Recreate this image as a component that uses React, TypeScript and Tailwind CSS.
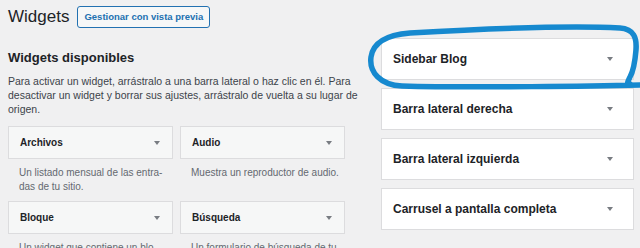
import React from "react";

const Arrow = () => (
  <svg width="6" height="4" viewBox="0 0 6 4" className="shrink-0">
    <polygon points="0,0 6,0 3,4" fill="#787c82" />
  </svg>
);

type W = { title: string; lines: string[] };

const widgets: W[] = [
  { title: "Archivos", lines: ["Un listado mensual de las entra-", "das de tu sitio."] },
  { title: "Audio", lines: ["Muestra un reproductor de audio."] },
  { title: "Bloque", lines: ["Un widget que contiene un blo-", "que."] },
  { title: "Búsqueda", lines: ["Un formulario de búsqueda de tu", "sitio."] },
];

const sidebars = [
  "Sidebar Blog",
  "Barra lateral derecha",
  "Barra lateral izquierda",
  "Carrusel a pantalla completa",
];

export default function App() {
  return (
    <div
      className="relative w-[640px] h-[248px] overflow-hidden bg-[#f0f0f1] text-[#1d2327]"
      style={{ fontFamily: '"Liberation Sans", Arial, sans-serif' }}
    >
      <div className="mt-[6px] h-[22px] pl-[8px] flex items-center gap-[8px]">
        <h1 className="text-[17px] leading-[22px] font-normal">Widgets</h1>
        <button className="h-[22px] px-[6px] rounded-[3px] border border-[#2271b1] bg-[#f6f7f7] text-[#2271b1] text-[9.5px] font-semibold leading-[20px]">
          Gestionar con vista previa
        </button>
      </div>

      <div className="mt-[10px] flex pl-[8px] gap-[36px]">
        <div className="w-[337px] pt-[12px]">
          <h2 className="text-[13px] leading-[16px] font-semibold">Widgets disponibles</h2>
          <p className="mt-[8px] text-[10.5px] leading-[14px] text-[#3c434a] whitespace-nowrap">
            Para activar un widget, arrástralo a una barra lateral o haz clic en él. Para
            <br />
            desactivar un widget y borrar sus ajustes, arrástralo de vuelta a su lugar de
            <br />
            origen.
          </p>
          <div className="mt-[10px] grid grid-cols-2 gap-x-[7px]">
            {widgets.map((w) => (
              <div key={w.title} className="flex flex-col">
                <div className="h-[33px] border border-[#dcdcde] bg-[#f6f7f7] flex items-center justify-between pl-[11px] pr-[12px]">
                  <span className="text-[10px] font-semibold">{w.title}</span>
                  <Arrow />
                </div>
                <div className="pt-[7px] pb-[7px] pl-[11px] text-[10px] leading-[14px] text-[#646970] whitespace-nowrap">
                  {w.lines.map((l, i) => (
                    <div key={i}>{l}</div>
                  ))}
                </div>
              </div>
            ))}
          </div>
        </div>

        <div className="w-[253px] flex flex-col gap-[8px]">
          {sidebars.map((s) => (
            <div
              key={s}
              className="h-[42px] border border-[#dcdcde] bg-white flex items-center justify-between pl-[11px] pr-[20px]"
            >
              <span className="text-[12px] font-semibold">{s}</span>
              <Arrow />
            </div>
          ))}
        </div>
      </div>

      <svg
        className="absolute left-0 top-0 pointer-events-none"
        width="640"
        height="248"
        viewBox="0 0 640 248"
      >
        <path
          d="M 640 85 C 600 86, 470 88, 402 86 C 380 85, 369 72, 371 57 C 373 43, 385 35, 410 33 C 480 29, 560 25, 620 28 C 634 29, 637 38, 636 50 C 635 62, 634 70, 630 77 C 628 81, 626 84, 630 84"
          fill="none"
          stroke="#1689cf"
          strokeWidth="5.5"
          strokeLinecap="round"
          strokeLinejoin="round"
        />
      </svg>
    </div>
  );
}
